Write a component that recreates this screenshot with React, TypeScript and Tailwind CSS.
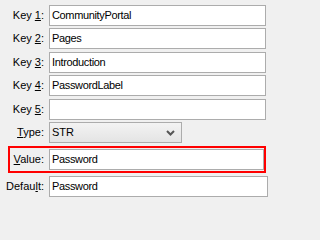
import React from "react";

const font = { fontFamily: '"Liberation Sans", Arial, sans-serif' };

function Label({ pre, acc, post }: { pre: string; acc: string; post: string }) {
  return (
    <div className="flex h-full items-center justify-end whitespace-nowrap text-[11px] text-black">
      <span>
        {pre}
        <span className="underline underline-offset-[1px]">{acc}</span>
        {post}
      </span>
    </div>
  );
}

function Field({ value, w = "w-[217px]" }: { value: string; w?: string }) {
  return (
    <div
      className={`flex h-[21px] ${w} items-center border border-[#acacac] bg-white pl-[2px] text-[11px] tracking-[-0.35px] text-black`}
    >
      {value}
    </div>
  );
}

function Row({
  label,
  children,
  mt,
}: {
  label: React.ReactNode;
  children: React.ReactNode;
  mt: string;
}) {
  return (
    <div className={`flex h-[21px] ${mt}`}>
      <div className="w-[44px]">{label}</div>
      <div className="ml-[5px]">{children}</div>
    </div>
  );
}

export default function App() {
  return (
    <div className="min-h-screen w-full bg-[#f0f0f0]" style={font}>
      <div className="h-[202px] w-[269px] overflow-hidden bg-[#f0f0f0] pt-[5px]">
        <Row mt="mt-0" label={<Label pre="Key " acc="1" post=":" />}>
          <Field value="CommunityPortal" />
        </Row>
        <Row mt="mt-[2px]" label={<Label pre="Key " acc="2" post=":" />}>
          <Field value="Pages" />
        </Row>
        <Row mt="mt-[3px]" label={<Label pre="Key " acc="3" post=":" />}>
          <Field value="Introduction" />
        </Row>
        <Row mt="mt-[2px]" label={<Label pre="Key " acc="4" post=":" />}>
          <Field value="PasswordLabel" />
        </Row>
        <Row mt="mt-[3px]" label={<Label pre="Key " acc="5" post=":" />}>
          <Field value="" />
        </Row>
        <Row mt="mt-[2px]" label={<Label pre="" acc="T" post="ype:" />}>
          <div className="flex h-[21px] w-[133px] items-center justify-between border border-[#acacac] bg-gradient-to-b from-[#f3f3f3] to-[#e4e4e4] pl-[2px] pr-[4px] text-[11px] text-black">
            <span>STR</span>
            <svg width="9" height="6" viewBox="0 0 9 6" className="mr-[2px]">
              <polyline points="1,1 4.5,4.5 8,1" fill="none" stroke="#555" strokeWidth="2" />
            </svg>
          </div>
        </Row>
        <div className="relative mt-[3px] h-[27px]">
          <div className="pointer-events-none absolute left-[8px] top-0 h-[27px] w-[258px] border-2 border-[#ff0000]" />
          <div className="flex h-[27px] items-center">
            <div className="h-[21px] w-[44px]">
              <Label pre="" acc="V" post="alue:" />
            </div>
            <div className="ml-[5px]">
              <Field value="Password" w="w-[215px]" />
            </div>
          </div>
        </div>
        <Row mt="mt-[3px]" label={<Label pre="Defau" acc="l" post="t:" />}>
          <Field value="Password" w="w-[219px]" />
        </Row>
      </div>
    </div>
  );
}
